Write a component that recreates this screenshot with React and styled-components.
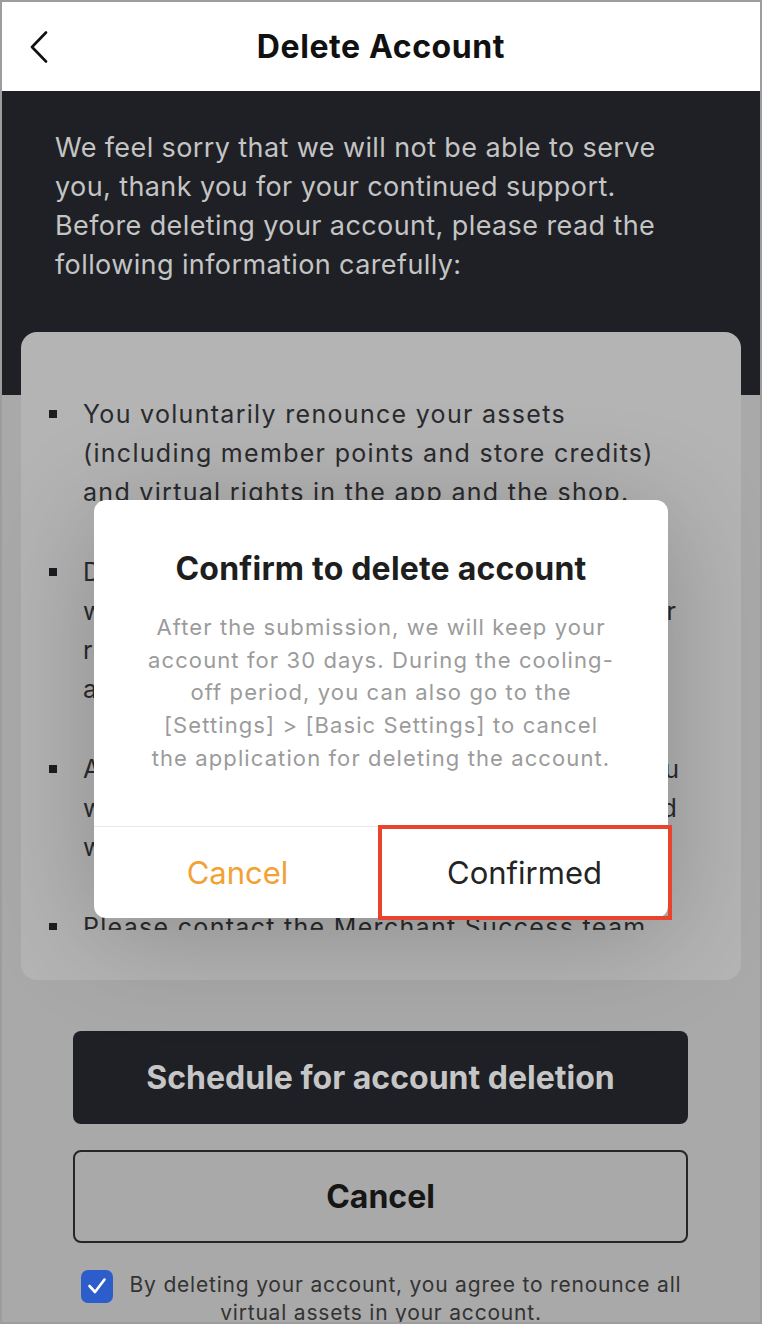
import React from 'react';
import styled, { createGlobalStyle } from 'styled-components';

const GlobalStyle = createGlobalStyle`
  html, body {
    margin: 0;
    padding: 0;
    background: #ffffff;
  }
  body {
    font-family: Inter, "Noto Sans", "Liberation Sans", sans-serif;
    -webkit-font-smoothing: antialiased;
  }
  *, *::before, *::after {
    box-sizing: border-box;
  }
`;

const Screen = styled.div`
  position: relative;
  width: 762px;
  height: 1324px;
  border: 2px solid #9d9d9d;
  overflow: hidden;
  display: flex;
  flex-direction: column;
  background: #a9a9a9;
`;

const Header = styled.header`
  flex: none;
  height: 89px;
  background: #ffffff;
  display: grid;
  grid-template-columns: 90px 1fr 90px;
  align-items: center;
`;

const BackButton = styled.button`
  border: none;
  background: none;
  padding: 0 0 0 27px;
  height: 40px;
  display: flex;
  align-items: center;
  cursor: pointer;
`;

const Title = styled.h1`
  margin: 0;
  text-align: center;
  font-size: 32px;
  font-weight: 700;
  letter-spacing: 0.6px;
  color: #111111;
`;

const Content = styled.main`
  flex: 1;
  display: flex;
  flex-direction: column;
  background: linear-gradient(#1e2025 0 304px, #a9a9a9 304px);
`;

const Intro = styled.p`
  margin: 0;
  padding: 37px 58px 0 53px;
  font-size: 27px;
  line-height: 39px;
  letter-spacing: 0.4px;
  color: #c4c4c4;
`;

const NoticeCard = styled.section`
  margin: 48px 19px 0;
  padding: 0 38px 50px 28px;
  background: #b4b4b4;
  border-radius: 16px;
`;

const NoticeViewport = styled.div`
  height: 598px;
  padding-top: 63px;
  overflow: hidden;
`;

const NoticeList = styled.ul`
  list-style: none;
  margin: 0;
  padding: 0;
  display: flex;
  flex-direction: column;
  gap: 41px;
`;

const NoticeItem = styled.li`
  display: grid;
  grid-template-columns: 34px 1fr;
  font-size: 25px;
  line-height: 39px;
  letter-spacing: 1.3px;
  color: #2a2b2e;

  &::before {
    content: '';
    width: 8px;
    height: 8px;
    margin-top: 15px;
    background: #1c1d21;
  }
`;

const Actions = styled.div`
  display: flex;
  flex-direction: column;
  gap: 26px;
  margin: 51px 72px 0 71px;
`;

const ActionButton = styled.button`
  height: 93px;
  border-radius: 8px;
  font-family: inherit;
  font-size: 32px;
  font-weight: 700;
  cursor: pointer;
  background: ${({ $primary }) => ($primary ? '#1e2025' : 'transparent')};
  color: ${({ $primary }) => ($primary ? '#c6c6c6' : '#161616')};
  border: ${({ $primary }) => ($primary ? 'none' : '2px solid #262626')};
`;

const Agreement = styled.p`
  margin: 28px 0 0;
  padding: 0 62px;
  text-align: center;
  font-size: 21px;
  line-height: 28px;
  letter-spacing: 0.8px;
  color: #333333;
`;

const CheckBox = styled.span`
  display: inline-flex;
  align-items: center;
  justify-content: center;
  width: 32px;
  height: 33px;
  margin: -4px 17px -4px 0;
  border-radius: 7px;
  background: #2d5dcb;
  vertical-align: middle;
`;

const Dialog = styled.div`
  position: absolute;
  top: 498px;
  left: 92px;
  width: 574px;
  background: #ffffff;
  border-radius: 12px;
  box-shadow: 0 16px 110px rgba(0, 0, 0, 0.22);
  display: flex;
  flex-direction: column;
`;

const DialogTitle = styled.h2`
  margin: 0;
  padding: 49px 20px 0;
  text-align: center;
  font-size: 32px;
  line-height: 40px;
  font-weight: 700;
  letter-spacing: 0.2px;
  color: #1e1e1e;
`;

const DialogText = styled.p`
  margin: 22px 0 0;
  padding: 0 50px 51px;
  text-align: center;
  font-size: 22px;
  line-height: 32.7px;
  letter-spacing: 1.1px;
  color: #9b9b9b;
`;

const DialogButtons = styled.div`
  display: grid;
  grid-template-columns: 1fr 1fr;
  height: 92px;
  border-top: 1px solid #e8e8e8;
`;

const DialogButton = styled.button`
  position: relative;
  border: none;
  background: none;
  font-family: inherit;
  font-size: 31px;
  font-weight: 400;
  cursor: pointer;
  color: ${({ $accent }) => ($accent ? '#f2a134' : '#242424')};

  ${({ $marked }) =>
    $marked &&
    `
    &::after {
      content: '';
      position: absolute;
      top: -2px;
      left: -3px;
      right: -4px;
      bottom: -2px;
      border: 4px solid #e8432c;
    }
  `}
`;

const notices = [
  'You voluntarily renounce your assets (including member points and store credits) and virtual rights in the app and the shop.',
  'Data of your account, including the order withdrawal records, will be cleared and never recovered, and the account name will not be available for registration again.',
  'After the account is deleted successfully, you will not be able to log in, and all the data held within it will be permanently erased.',
  'Please contact the Merchant Success team beforehand if you have any questions about the deletion.',
];

export default function App() {
  return (
    <>
      <GlobalStyle />
      <Screen>
        <Header>
          <BackButton aria-label="Back">
            <svg width="20" height="32" viewBox="0 0 20 32" fill="none">
              <polyline
                points="17,1.5 3,16 17,30.5"
                stroke="#111"
                strokeWidth="2.6"
                strokeLinecap="round"
                strokeLinejoin="round"
              />
            </svg>
          </BackButton>
          <Title>Delete Account</Title>
          <span />
        </Header>

        <Content>
          <Intro>
            We feel sorry that we will not be able to serve you, thank you for your continued
            support. Before deleting your account, please read the following information
            carefully:
          </Intro>

          <NoticeCard>
            <NoticeViewport>
              <NoticeList>
                {notices.map((text) => (
                  <NoticeItem key={text}>{text}</NoticeItem>
                ))}
              </NoticeList>
            </NoticeViewport>
          </NoticeCard>

          <Actions>
            <ActionButton $primary>Schedule for account deletion</ActionButton>
            <ActionButton>Cancel</ActionButton>
          </Actions>

          <Agreement>
            <CheckBox>
              <svg width="20" height="18" viewBox="0 0 20 18" fill="none">
                <polyline
                  points="2.5,9 8,15 17.5,2.5"
                  stroke="#fff"
                  strokeWidth="2.6"
                  strokeLinecap="round"
                  strokeLinejoin="round"
                />
              </svg>
            </CheckBox>
            By deleting your account, you agree to renounce all virtual assets in your account.
          </Agreement>
        </Content>

        <Dialog role="dialog">
          <DialogTitle>Confirm to delete account</DialogTitle>
          <DialogText>
            After the submission, we will keep your account for 30 days. During the cooling-off
            period, you can also go to the [Settings] &gt; [Basic Settings] to cancel the
            application for deleting the account.
          </DialogText>
          <DialogButtons>
            <DialogButton $accent>Cancel</DialogButton>
            <DialogButton $marked>Confirmed</DialogButton>
          </DialogButtons>
        </Dialog>
      </Screen>
    </>
  );
}
